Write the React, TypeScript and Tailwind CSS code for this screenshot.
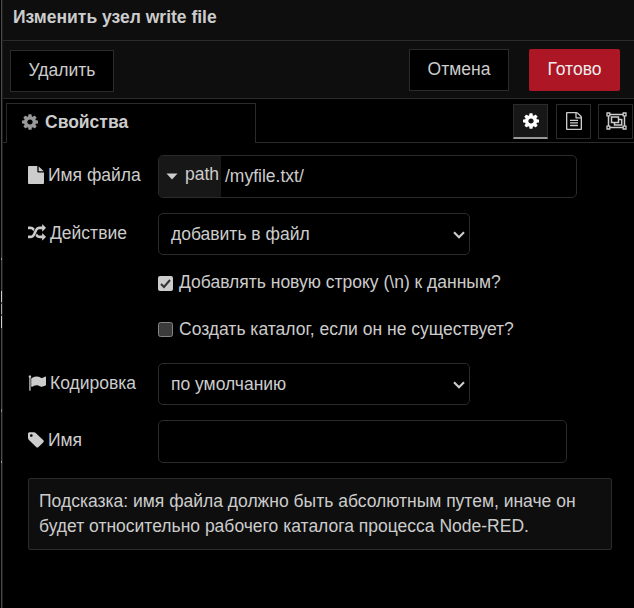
import React from "react";

const icons = {
  cog: "M1152 896q0-106-75-181t-181-75-181 75-75 181 75 181 181 75 181-75 75-181zm512-109v222q0 12-8 23t-20 13l-185 28q-19 54-39 91 35 50 107 138 10 12 10 25t-9 23q-27 37-99 108t-94 71q-12 0-26-9l-138-108q-44 23-91 38-16 136-29 186-7 28-36 28h-222q-14 0-24.5-8.5t-11.5-21.5l-28-184q-49-16-90-37l-141 107q-10 9-25 9-14 0-25-11-126-114-165-168-7-10-7-23 0-12 8-23 15-21 51-66.5t54-70.5q-27-50-41-99l-183-27q-13-2-21-12.5t-8-23.5v-222q0-12 8-23t19-13l186-28q14-46 39-92-40-57-107-138-10-12-10-24 0-10 9-23 26-36 98.5-107.5t94.5-71.5q13 0 26 10l138 107q44-23 91-38 16-136 29-186 7-28 36-28h222q14 0 24.5 8.5t11.5 21.5l28 184q49 16 90 37l142-107q9-9 24-9 13 0 25 10 129 119 165 170 7 8 7 22 0 12-8 23-15 21-51 66.5t-54 70.5q26 50 41 98l183 28q13 2 21 12.5t8 23.5z",
  file: "M1152 512v-472q22 14 36 28l408 408q14 14 28 36h-472zm-128 32q0 40 28 68t68 28h544v1056q0 40-28 68t-68 28h-1344q-40 0-68-28t-28-68v-1600q0-40 28-68t68-28h800v544z",
  fileText: "M1596 380q28 28 48 76t20 88v1152q0 40-28 68t-68 28h-1344q-40 0-68-28t-28-68v-1600q0-40 28-68t68-28h896q40 0 88 20t76 48zm-444-244v376h376q-10-29-22-41l-313-313q-12-12-41-22zm384 1528v-1024h-416q-40 0-68-28t-28-68v-416h-768v1536h1280zm-1024-864q0-14 9-23t23-9h704q14 0 23 9t9 23v64q0 14-9 23t-23 9h-704q-14 0-23-9t-9-23v-64zm736 224q14 0 23 9t9 23v64q0 14-9 23t-23 9h-704q-14 0-23-9t-9-23v-64q0-14 9-23t23-9h704zm0 256q14 0 23 9t9 23v64q0 14-9 23t-23 9h-704q-14 0-23-9t-9-23v-64q0-14 9-23t23-9h704z",
  random: "M666 481q-60 92-137 273-22-45-37-72.5t-40.5-63.5-51-56.5-63-35-81.5-14.5h-224q-14 0-23-9t-9-23v-192q0-14 9-23t23-9h224q250 0 410 225zm1126 799q0 14-9 23l-320 320q-9 9-23 9-13 0-22.5-9.5t-9.5-22.5v-192q-32 0-85 .5t-81 1-73-1-71-5-64-10.5-63-18.5-58-28.5-59-40-55-53.5-56-69.5q59-93 136-273 22 45 37 72.5t40.5 63.5 51 56.5 63 35 81.5 14.5h256v-192q0-14 9-23t23-9q12 0 24 10l319 319q9 9 9 23zm0-896q0 14-9 23l-320 320q-9 9-23 9-13 0-22.5-9.5t-9.5-22.5v-192h-256q-48 0-87 15t-69 45-51 61.5-45 77.5q-32 62-78 171-29 66-49.5 111t-54 105-64 100-74 83-90 68.5-106.5 42-128 16.5h-224q-14 0-23-9t-9-23v-192q0-14 9-23t23-9h224q48 0 87-15t69-45 51-61.5 45-77.5q32-62 78-171 29-66 49.5-111t54-105 64-100 74-83 90-68.5 106.5-42 128-16.5h256v-192q0-14 9-23t23-9q12 0 24 10l319 319q9 9 9 23z",
  flag: "M320 256q0 72-64 110v1266q0 13-9.5 22.5t-22.5 9.5h-64q-13 0-22.5-9.5t-9.5-22.5v-1266q-64-38-64-110 0-53 37.5-90.5t90.5-37.5 90.5 37.5 37.5 90.5zm1472 64v763q0 25-12.5 38.5t-39.5 27.5q-215 116-369 116-61 0-123.5-22t-108.5-48-115.5-48-142.5-22q-192 0-464 146-17 9-33 9-26 0-45-19t-19-45v-742q0-32 31-55 21-14 79-43 236-120 421-120 107 0 200 29t219 88q38 19 88 19 54 0 117.5-21t110-47 88-47 54.5-21q26 0 45 19t19 45z",
  tag: "M576 448q0-53-37.5-90.5t-90.5-37.5-90.5 37.5-37.5 90.5 37.5 90.5 90.5 37.5 90.5-37.5 37.5-90.5zm1067 576q0 53-37 90l-491 492q-39 37-91 37-53 0-90-37l-715-716q-38-37-64.5-101t-26.5-117v-416q0-52 38-90t90-38h416q53 0 117 26.5t102 64.5l715 714q37 39 37 91z",
};

const narrow = ["cog", "file", "fileText", "tag"];

function Icon({ name, className = "" }: { name: keyof typeof icons; className?: string }) {
  const isNarrow = narrow.includes(name);
  return (
    <svg
      viewBox={isNarrow ? "128 0 1536 1792" : "0 0 1792 1792"}
      className={`h-[18px] shrink-0 ${isNarrow ? "w-[16px]" : "w-[18px]"} ${className}`}
      preserveAspectRatio="none"
      fill="currentColor"
    >
      <path d={icons[name]} />
    </svg>
  );
}

function GroupIcon() {
  return (
    <svg viewBox="0 0 21 18" className="h-[18px] w-[21px]" fill="none" stroke="currentColor">
      <path d="M4 2.5h13M4 15.5h13M2.5 4v10M18.5 4v10" strokeWidth="1.5" />
      <path d="M1 1h2.8v2.8H1zM17.2 1H20v2.8h-2.8zM1 14.2h2.8V17H1zM17.2 14.2H20V17h-2.8z" strokeWidth="1.3" />
      <path d="M5.5 5h7v5.5h-7zM12.5 7.5h3.2V13H8.5v-2.5" strokeWidth="1.5" />
    </svg>
  );
}

function Select({ value }: { value: string }) {
  return (
    <button className="flex h-[42px] w-[312px] items-center justify-between rounded-[5px] border border-[#2b2b2b] pl-3 pr-[4px]">
      <span>{value}</span>
      <svg viewBox="0 0 12 8" className="mt-px h-2 w-3" fill="none" stroke="currentColor" strokeWidth="2.1">
        <path d="M1 1.2l5 5 5-5" />
      </svg>
    </button>
  );
}

function Row({ icon, label, children, className }: { icon: keyof typeof icons; label: string; children: React.ReactNode; className: string }) {
  return (
    <div className={`flex ${className}`}>
      <label className="flex h-[40px] w-[130px] shrink-0 items-center gap-1">
        <Icon name={icon} className={icon === "tag" ? "-mt-px" : ""} />
        <span>{label}</span>
      </label>
      {children}
    </div>
  );
}

export default function App() {
  return (
    <div className="flex h-[608px] w-[634px] overflow-hidden bg-black font-['Liberation_Sans',Arial,sans-serif] text-[17.5px] leading-[25px] whitespace-nowrap text-[#ccc]">
      <div className="flex h-full w-[3px] shrink-0 flex-col border-r border-l border-l-black border-r-[#1c1c1c] bg-[#4a4a4a] pt-[258px]">
        <div className="h-[2px] bg-[#999]" />
        <div className="mt-[31px] h-[11px] bg-[#ccc]" />
        <div className="mt-[2px] h-[10px] bg-[#aaa]" />
        <div className="mt-[2px] h-[12px] bg-[#ccc]" />
        <div className="mt-[81px] h-[3px] bg-[#888]" />
        <div className="mt-[49px] h-[2px] bg-[#999]" />
      </div>
      <div className="min-w-0 flex-1">
        <header className="h-[41px] border-b border-[#2b2b2b] bg-[#0e0e0e] pt-[5px] pl-[10px] font-bold">
          Изменить узел write file
        </header>
        <div className="flex h-[58px] items-start border-b border-[#2b2b2b] bg-[#0e0e0e] pt-[8px] pl-[7px]">
          <button className="mt-px h-[42px] w-[104px] border border-[#2b2b2b] bg-black pb-px">Удалить</button>
          <button className="ml-[295px] h-[42px] w-[100px] border border-[#2b2b2b] bg-black pb-[2px]">Отмена</button>
          <button className="ml-5 h-[42px] w-[91px] rounded-[2px] bg-[#ad1625] pb-[2px] text-[#eee]">Готово</button>
        </div>
        <div className="flex h-[44px] items-end">
          <div className="h-px w-[3px] bg-[#2b2b2b]" />
          <div className="flex h-[40px] w-[250px] items-center gap-[7px] border border-b-0 border-[#2b2b2b] pb-[3px] pl-[15px] font-bold">
            <Icon name="cog" className="text-[#999]" />
            Свойства
          </div>
          <div className="flex h-[40px] flex-1 border-b border-[#2b2b2b] pt-px pl-[257px]">
            <button className="mr-2 flex h-[35px] w-[35px] shrink-0 items-center justify-center border border-b-2 border-[#2b2b2b] border-b-[#999] bg-[#171717] text-white">
              <Icon name="cog" />
            </button>
            <button className="mr-[7px] flex h-[35px] w-[35px] shrink-0 items-center justify-center border border-[#2b2b2b] pb-[2px]">
              <Icon name="fileText" />
            </button>
            <button className="flex h-[35px] w-[35px] shrink-0 items-center justify-center border border-[#2b2b2b] pb-[2px] pl-px">
              <GroupIcon />
            </button>
          </div>
        </div>
        <main className="pt-[12px] pl-[25px]">
          <Row icon="file" label="Имя файла" className="h-[58px]">
            <div className="flex h-[43px] w-[419px] overflow-hidden rounded-[5px] border border-[#2b2b2b]">
              <button className="flex w-[62px] items-center gap-[7px] bg-[#171717] pb-[4px] pl-[7px]">
                <svg viewBox="0 0 12 7" className="mt-[4px] h-[7px] w-3" fill="currentColor">
                  <path d="M.5.5h11L6 6.5z" />
                </svg>
                path
              </button>
              <span className="pt-[8px] pl-1">/myfile.txt/</span>
            </div>
          </Row>
          <Row icon="random" label="Действие" className="h-[57px]">
            <Select value="добавить в файл" />
          </Row>
          <div className="flex h-[47px] items-start gap-[6px] pl-[130px]">
            <svg viewBox="0 0 15 15" className="mt-[6px] h-[15px] w-[15px]">
              <rect width="15" height="15" rx="2" fill="#ccc" />
              <path d="M3 8l3 3 6-7" fill="none" stroke="#333" strokeWidth="2" />
            </svg>
            <span>Добавлять новую строку (\n) к данным?</span>
          </div>
          <div className="flex h-[46px] items-start gap-[6px] pl-[130px]">
            <span className="mt-[5px] h-[15px] w-[15px] rounded-[2.5px] border border-[#858585] bg-[#3b3b3b]" />
            <span>Создать каталог, если он не существует?</span>
          </div>
          <Row icon="flag" label="Кодировка" className="h-[57px]">
            <Select value="по умолчанию" />
          </Row>
          <Row icon="tag" label="Имя" className="h-[58px]">
            <div className="h-[43px] w-[409px] rounded-[5px] border border-[#2b2b2b]" />
          </Row>
          <div className="h-[72px] w-[584px] rounded-[2px] border border-[#2b2b2b] bg-[#0e0e0e] pt-[10px] pl-[10px]">
            Подсказка: имя файла должно быть абсолютным путем, иначе он
            <br />
            будет относительно рабочего каталога процесса Node-RED.
          </div>
        </main>
      </div>
    </div>
  );
}
